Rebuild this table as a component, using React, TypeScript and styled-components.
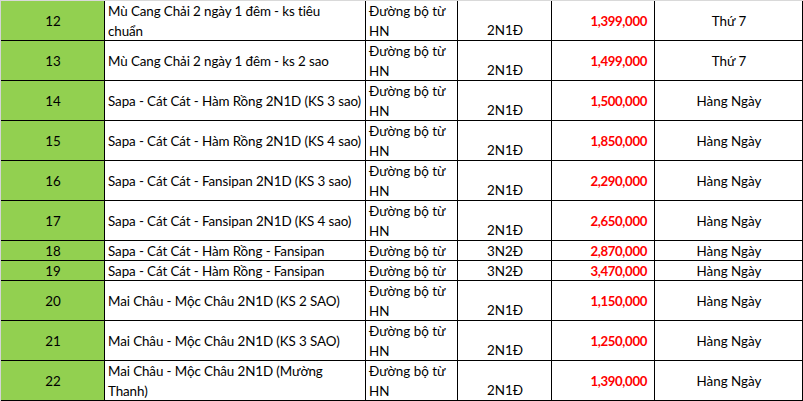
import React from "react";
import styled, { createGlobalStyle } from "styled-components";

const Global = createGlobalStyle`
  html, body { margin: 0; padding: 0; background: #ffffff; }
  body { font-family: "Lato", "Noto Sans", sans-serif; }
`;

const Sheet = styled.div`
  display: grid;
  grid-template-columns: 104px 261px 92px 94px 103px 148px;
  width: 803px;
  box-sizing: border-box;
  border-left: 1px solid #d4d4d4;
  border-top: 1px solid #d9d9d9;
  font-family: "Lato", "Noto Sans", sans-serif;
  font-size: 13.4px;
  color: #000;
`;

type Align = "top" | "center" | "bottom";

const Cell = styled.div<{ $h: number; $v: Align; $h2?: "left" | "center" | "right"; $green?: boolean }>`
  box-sizing: border-box;
  height: ${(p) => p.$h}px;
  border-right: 1px solid #000;
  border-bottom: 1px solid #000;
  background: ${(p) => (p.$green ? "#92d050" : "#ffffff")};
  display: flex;
  flex-direction: column;
  justify-content: ${(p) => (p.$v === "top" ? "flex-start" : p.$v === "bottom" ? "flex-end" : "center")};
  align-items: ${(p) => (p.$h2 === "center" ? "center" : p.$h2 === "right" ? "flex-end" : "flex-start")};
  padding: 0 2px 0 3px;
  overflow: hidden;
  line-height: 20px;
  white-space: nowrap;
`;

const Line = styled.span`
  display: block;
  line-height: 20px;
  flex-shrink: 0;
`;

const Name = styled(Line)`
  letter-spacing: -0.1px;
`;

const Price = styled.span`
  color: #ff0000;
  font-weight: 700;
  font-size: 13.2px;
  letter-spacing: -0.35px;
  padding-right: 5px;
`;

type Row = {
  no: number;
  name: string[];
  dur: string;
  price: string;
  day: string;
  h: number;
};

const rows: Row[] = [
  { no: 12, name: ["Mù Cang Chải 2 ngày 1 đêm - ks tiêu", "chuẩn"], dur: "2N1Đ", price: "1,399,000", day: "Thứ 7", h: 40 },
  { no: 13, name: ["Mù Cang Chải 2 ngày 1 đêm - ks 2 sao"], dur: "2N1Đ", price: "1,499,000", day: "Thứ 7", h: 40 },
  { no: 14, name: ["Sapa - Cát Cát - Hàm Rồng 2N1D (KS 3 sao)"], dur: "2N1Đ", price: "1,500,000", day: "Hàng Ngày", h: 40 },
  { no: 15, name: ["Sapa - Cát Cát - Hàm Rồng 2N1D (KS 4 sao)"], dur: "2N1Đ", price: "1,850,000", day: "Hàng Ngày", h: 40 },
  { no: 16, name: ["Sapa - Cát Cát - Fansipan 2N1D (KS 3 sao)"], dur: "2N1Đ", price: "2,290,000", day: "Hàng Ngày", h: 40 },
  { no: 17, name: ["Sapa - Cát Cát - Fansipan 2N1D (KS 4 sao)"], dur: "2N1Đ", price: "2,650,000", day: "Hàng Ngày", h: 40 },
  { no: 18, name: ["Sapa - Cát Cát - Hàm Rồng - Fansipan"], dur: "3N2Đ", price: "2,870,000", day: "Hàng Ngày", h: 20 },
  { no: 19, name: ["Sapa - Cát Cát - Hàm Rồng - Fansipan"], dur: "3N2Đ", price: "3,470,000", day: "Hàng Ngày", h: 20 },
  { no: 20, name: ["Mai Châu - Mộc Châu 2N1D (KS 2 SAO)"], dur: "2N1Đ", price: "1,150,000", day: "Hàng Ngày", h: 40 },
  { no: 21, name: ["Mai Châu - Mộc Châu 2N1D (KS 3 SAO)"], dur: "2N1Đ", price: "1,250,000", day: "Hàng Ngày", h: 40 },
  { no: 22, name: ["Mai Châu - Mộc Châu 2N1D (Mường", "Thanh)"], dur: "2N1Đ", price: "1,390,000", day: "Hàng Ngày", h: 40 },
];

export default function App() {
  return (
    <>
      <Global />
      <Sheet>
        {rows.map((r) => {
          const short = r.h < 40;
          return (
            <React.Fragment key={r.no}>
              <Cell $h={r.h} $v="center" $h2="center" $green>
                <Line>{r.no}</Line>
              </Cell>
              <Cell $h={r.h} $v="center">
                {r.name.map((l) => (
                  <Name key={l}>{l}</Name>
                ))}
              </Cell>
              <Cell $h={r.h} $v="top">
                <Line>Đường bộ từ</Line>
                {!short && <Line>HN</Line>}
              </Cell>
              <Cell $h={r.h} $v={short ? "center" : "bottom"} $h2="center">
                <Line>{r.dur}</Line>
              </Cell>
              <Cell $h={r.h} $v="center" $h2="right">
                <Price>{r.price}</Price>
              </Cell>
              <Cell $h={r.h} $v="center" $h2="center">
                <Line>{r.day}</Line>
              </Cell>
            </React.Fragment>
          );
        })}
      </Sheet>
    </>
  );
}
